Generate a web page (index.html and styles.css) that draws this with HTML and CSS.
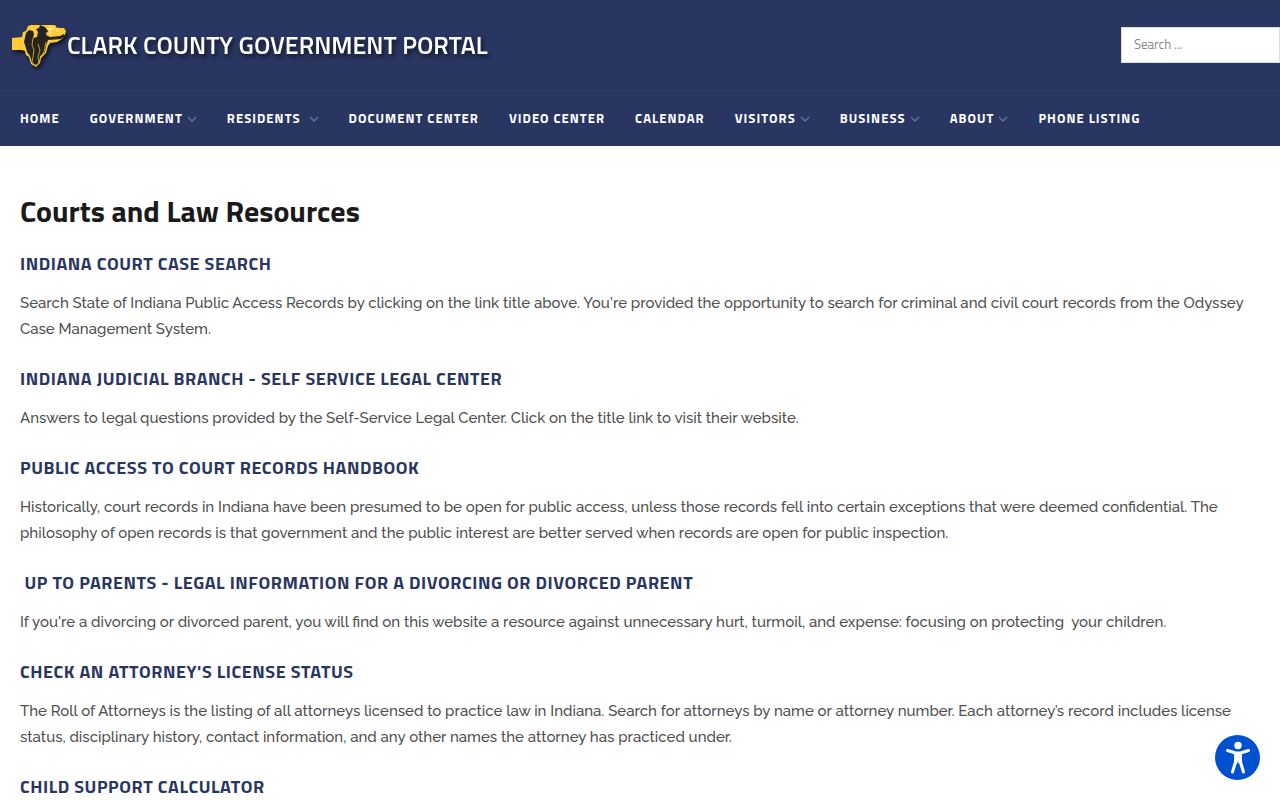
FILE: index.html
```
<!DOCTYPE html>
<html lang="en">
<head>
  <meta charset="UTF-8" />
  <title>Courts and Law Resources</title>
  <meta name="viewport" content="width=device-width, initial-scale=1.0" />
  <link rel="stylesheet" href="styles.css">
</head>
<body>
  <header>
    <div class="top-bar">
      <a href="#" class="brand">
        <svg class="brand-logo" width="57" height="48" viewBox="0 0 57 48" aria-hidden="true">
          <path d="M2 17L12 16L13 11L16 10L18 5L21 4H45L47 7H54L56 10L55 14L52 18L47 21L40 22L38 25L36 32L31 37L30 42L26 46L21 43L19 36L16 34L15 30L12 29H2Z" fill="#ffcb38" />
          <path d="M14 21L16 12L19 9L23 10L24 13L23 17L27 16L28 11L26 8L29 7L30 4L35 6L38 10L36 14L40 16L50 15L54 13L55 15L51 18L38 19L36 25L35 31L30 36L29 41L26 44L22 42L20 35L17 31L16 27Z" fill="#24231f" />
          <path d="M23 17L22 24L24 29L23 36L22 41L25 45L29 42L28 36L30 29L28 23M36 21L34 31L30 36" fill="none" stroke="#c79c2b" stroke-width="1" />
          <path d="M40 5v9M37 8h7M46 10h2M48 7h1M36 12h1" fill="none" stroke="#fff3b5" stroke-width="1" />
        </svg>
        <span class="brand-name">CLARK COUNTY GOVERNMENT PORTAL</span>
      </a>
      <form class="search" role="search">
        <input type="search" placeholder="Search ..." aria-label="Search">
      </form>
    </div>
    <nav>
      <ul class="menu">
        <li><a href="#">HOME</a></li>
        <li><a href="#">GOVERNMENT<svg class="arrow" viewBox="0 0 10 7" aria-hidden="true"><path d="M1 1l4 4 4-4" /></svg></a></li>
        <li><a href="#">RESIDENTS&nbsp;<svg class="arrow" viewBox="0 0 10 7" aria-hidden="true"><path d="M1 1l4 4 4-4" /></svg></a></li>
        <li><a href="#">DOCUMENT CENTER</a></li>
        <li><a href="#">VIDEO CENTER</a></li>
        <li><a href="#">CALENDAR</a></li>
        <li><a href="#">VISITORS<svg class="arrow" viewBox="0 0 10 7" aria-hidden="true"><path d="M1 1l4 4 4-4" /></svg></a></li>
        <li><a href="#">BUSINESS<svg class="arrow" viewBox="0 0 10 7" aria-hidden="true"><path d="M1 1l4 4 4-4" /></svg></a></li>
        <li><a href="#">ABOUT<svg class="arrow" viewBox="0 0 10 7" aria-hidden="true"><path d="M1 1l4 4 4-4" /></svg></a></li>
        <li><a href="#">PHONE LISTING</a></li>
      </ul>
    </nav>
  </header>

  <main class="content">
    <h1>Courts and Law Resources</h1>

    <h3><a href="#">INDIANA COURT CASE SEARCH</a></h3>
    <p>Search State of Indiana Public Access Records by clicking on the link title above. You're provided the opportunity to search for criminal and civil court records from the Odyssey Case Management System.</p>

    <h3><a href="#">INDIANA JUDICIAL BRANCH - SELF SERVICE LEGAL CENTER</a></h3>
    <p>Answers to legal questions provided by the Self-Service Legal Center. Click on the title link to visit their website.</p>

    <h3><a href="#">PUBLIC ACCESS TO COURT RECORDS HANDBOOK</a></h3>
    <p>Historically, court records in Indiana have been presumed to be open for public access, unless those records fell into certain exceptions that were deemed confidential. The philosophy of open records is that government and the public interest are better served when records are open for public inspection.</p>

    <h3>&nbsp;<a href="#">UP TO PARENTS - LEGAL INFORMATION FOR A DIVORCING OR DIVORCED PARENT</a></h3>
    <p>If you're a divorcing or divorced parent, you will find on this website a resource against unnecessary hurt, turmoil, and expense: focusing on protecting&nbsp; your children.</p>

    <h3><a href="#">CHECK AN ATTORNEY'S LICENSE STATUS</a></h3>
    <p>The Roll of Attorneys is the listing of all attorneys licensed to practice law in Indiana. Search for attorneys by name or attorney number. Each attorney’s record includes license status, disciplinary history, contact information, and any other names the attorney has practiced under.</p>

    <h3><a href="#">CHILD SUPPORT CALCULATOR</a></h3>
  </main>

  <button class="access-btn" type="button" aria-label="Accessibility options">
    <svg width="45" height="45" viewBox="0 0 45 45" aria-hidden="true">
      <circle cx="23" cy="10.500" r="3.700" />
      <path d="M12.500 15.500l8 2.500h5l8-2.500M20.500 19v8l-3 10M25.500 19v8l3 10" />
      <path class="torso" d="M19 17h8v11l-2 2-2-3-2 3-2-2z" />
    </svg>
  </button>
</body>
</html>
```
FILE: styles.css
```
* { box-sizing: border-box; }

body {
  font-family: "Raleway", "Lato", sans-serif;
  font-size: 15px;
  font-weight: 500;
  line-height: 26px;
  color: #505050;
  background: #fff;
  margin: 0;
}

a {
  color: inherit;
  text-decoration: none;
}

header {
  background: #293661;
  color: #fff;
}

.top-bar {
  display: flex;
  align-items: center;
  justify-content: space-between;
  height: 90px;
  padding-left: 10px;
}

.brand {
  display: flex;
  align-items: center;
  filter: drop-shadow(2px 3px 2px rgba(0, 0, 0, 0.6));
}

.brand-logo {
  display: block;
}

.brand-name {
  font-family: "Titillium Web", "Roboto", sans-serif;
  font-size: 25px;
  font-weight: 600;
}

.search input {
  display: block;
  width: 159px;
  height: 36px;
  padding: 0 12px 2px;
  border: 1px solid #ddd;
  border-radius: 0;
  background: #fff;
  font-family: "Titillium Web", "Open Sans", sans-serif;
  font-size: 13px;
}

.search input::placeholder {
  color: #888;
}

nav {
  border-top: 1px solid #323f6a;
}

.menu {
  display: flex;
  gap: 30px;
  margin: 0;
  padding: 0 20px;
  list-style: none;
}

.menu a {
  display: flex;
  align-items: center;
  height: 55px;
  padding-bottom: 2px;
  font-family: "Titillium Web", "Open Sans", sans-serif;
  font-size: 13px;
  font-weight: 700;
  letter-spacing: 0.08em;
  white-space: nowrap;
}

.arrow {
  width: 10px;
  height: 7px;
  margin-top: 4px;
  margin-left: 4px;
  fill: none;
  stroke: #66719b;
  stroke-width: 1.5;
}

.content {
  padding: 45px 20px;
}

h1, h3 {
  font-family: "Titillium Web", "Open Sans", sans-serif;
  margin: 0;
}

h1 {
  font-size: 30px;
  line-height: 40px;
  color: #1a1a1a;
  margin-bottom: 20px;
}

h3 {
  font-size: 18px;
  font-weight: 700;
  line-height: 26px;
  letter-spacing: 0.03em;
  color: #293661;
  margin-bottom: 13px;
}

p {
  margin: 0 0 24px;
}

.access-btn {
  position: fixed;
  right: 20px;
  bottom: 20px;
  width: 45px;
  height: 45px;
  padding: 0;
  border: none;
  border-radius: 50%;
  background: #0050d0;
  cursor: pointer;
}

.access-btn svg {
  display: block;
  fill: #fff;
}

.access-btn path {
  fill: none;
  stroke: #fff;
  stroke-width: 3;
  stroke-linecap: round;
  stroke-linejoin: round;
}

.access-btn .torso {
  fill: #fff;
  stroke: none;
}
```
